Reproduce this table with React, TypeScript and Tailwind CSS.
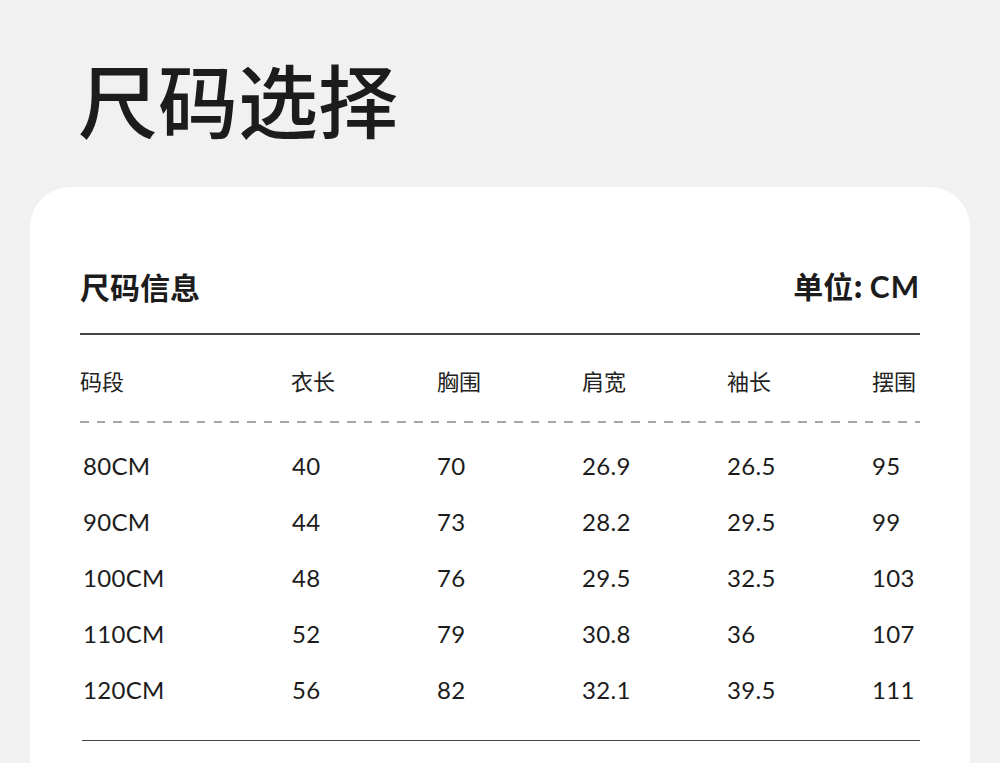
import React from 'react';

const cjk = "font-['Noto_Sans_CJK_SC','Noto_Sans',sans-serif]";
const num = "font-['Lato','Noto_Sans_CJK_SC',sans-serif]";

const headers = ['码段', '衣长', '胸围', '肩宽', '袖长', '摆围'];

const rows = [
  ['80CM', '40', '70', '26.9', '26.5', '95'],
  ['90CM', '44', '73', '28.2', '29.5', '99'],
  ['100CM', '48', '76', '29.5', '32.5', '103'],
  ['110CM', '52', '79', '30.8', '36', '107'],
  ['120CM', '56', '82', '32.1', '39.5', '111'],
];

const cols = 'grid grid-cols-[211px_146px_145px_145px_145px_1fr]';

const App: React.FC = () => {
  return (
    <div className="min-h-[763px] h-[763px] overflow-hidden bg-[#f1f1f1] px-[30px]">
      {/* Page title */}
      <h1 className={`${cjk} pl-[48px] pt-[57px] mb-[50px] text-[80px] leading-[80px] font-medium text-[#1c1c1c]`}>
        尺码选择
      </h1>

      {/* Size card */}
      <div className="bg-white rounded-t-[40px] px-[50px] pb-[40px]">
        <div className="flex items-center justify-between pt-[81px]">
          <span className={`${cjk} text-[30px] leading-[34px] font-bold text-[#1c1c1c]`}>尺码信息</span>
          <span className={`${cjk} text-[30px] leading-[34px] font-bold text-[#1c1c1c]`}>
            单位: <span className="font-['Lato',sans-serif] tracking-[1px]">CM</span>
          </span>
        </div>

        <div className="mt-[30px] h-[1.5px] bg-[#444]" />

        <div className={`${cols} pt-[30px]`}>
          {headers.map((h) => (
            <span key={h} className={`${cjk} text-[22px] leading-[30px] text-[#222]`}>
              {h}
            </span>
          ))}
        </div>

        <div className="mt-[26px] h-[2px] bg-[repeating-linear-gradient(to_right,#a6a6a6_0_8.5px,transparent_8.5px_16.7px)]" />

        <div className="mt-[15px]">
          {rows.map((r) => (
            <div key={r[0]} className={`${cols} h-[56px] items-center`}>
              {r.map((v, i) => (
                <span
                  key={i}
                  className={`${num} text-[24px] leading-[30px] tracking-[0.3px] text-[#1c1c1c] ${i === 0 ? 'pl-[3px]' : i === 1 ? 'pl-[1px]' : ''}`}
                >
                  {v}
                </span>
              ))}
            </div>
          ))}
        </div>

        <div className="mt-[22px] ml-[2px] h-[1.5px] bg-[#444]" />
      </div>
    </div>
  );
};

export default App;
